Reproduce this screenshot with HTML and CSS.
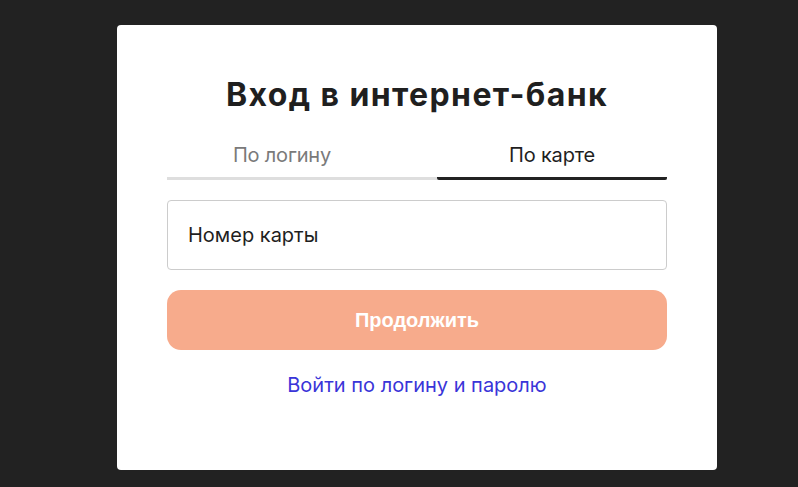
FILE: index.html
```html
<!DOCTYPE html>
<html lang="ru">
<head>
<meta charset="utf-8">
<title>Вход в интернет-банк</title>
<link rel="stylesheet" href="styles.css">
</head>
<body>
<main class="card">
  <h1 class="title">Вход в интернет-банк</h1>
  <div class="tabs">
    <button class="tab">По логину</button>
    <button class="tab tab-active">По карте</button>
  </div>
  <label class="field">
    <input class="field-input" type="text" placeholder="Номер карты">
  </label>
  <button class="submit">Продолжить</button>
  <a class="alt-link" href="#">Войти по логину и паролю</a>
</main>
</body>
</html>
```
FILE: styles.css
```css
* { box-sizing: border-box; }
html, body { margin: 0; padding: 0; }
body {
  background: #222222;
  font-family: Inter, "Noto Sans", "Liberation Sans", sans-serif;
  min-height: 487px;
  padding-top: 25px;
}
.card {
  width: 600px;
  margin-left: 117px;
  background: #ffffff;
  border-radius: 4px;
  padding: 50px 50px 73px;
  display: flex;
  flex-direction: column;
}
.title {
  margin: 0;
  font-size: 32px;
  line-height: 40px;
  font-weight: 700;
  letter-spacing: 1.4px;
  color: #1f1f1f;
  text-align: center;
}
.tabs {
  margin-top: 28px;
  display: grid;
  grid-template-columns: 1fr 1fr;
  column-gap: 40px;
  background: linear-gradient(#dedede, #dedede) left bottom / 100% 3px no-repeat;
}
.tab {
  border: 0;
  background: none;
  font-family: inherit;
  font-size: 20px;
  line-height: 24px;
  letter-spacing: -0.2px;
  color: #7a7a7a;
  padding: 0 0 13px;
  text-align: center;
  cursor: pointer;
}
.tab-active {
  color: #1f1f1f;
  background: linear-gradient(#222222, #222222) left bottom / 100% 3px no-repeat;
  border-radius: 0 0 2px 2px;
}
.field {
  display: block;
  margin-top: 20px;
}
.field-input {
  width: 100%;
  height: 70px;
  border: 1px solid #cccccc;
  border-radius: 4px;
  padding: 0 20px;
  font-family: inherit;
  font-size: 20px;
  color: #1f1f1f;
  outline: none;
}
.field-input::placeholder { color: #1f1f1f; opacity: 1; }
.submit {
  margin-top: 20px;
  height: 60px;
  border: 0;
  border-radius: 14px;
  background: #f7ab8c;
  color: #ffffff;
  font-family: "Liberation Sans", Arial, sans-serif;
  font-size: 20px;
  font-weight: 700;
}
.alt-link {
  margin-top: 23px;
  align-self: center;
  font-size: 20px;
  line-height: 24px;
  color: #3a35d8;
  text-decoration: none;
}
```
